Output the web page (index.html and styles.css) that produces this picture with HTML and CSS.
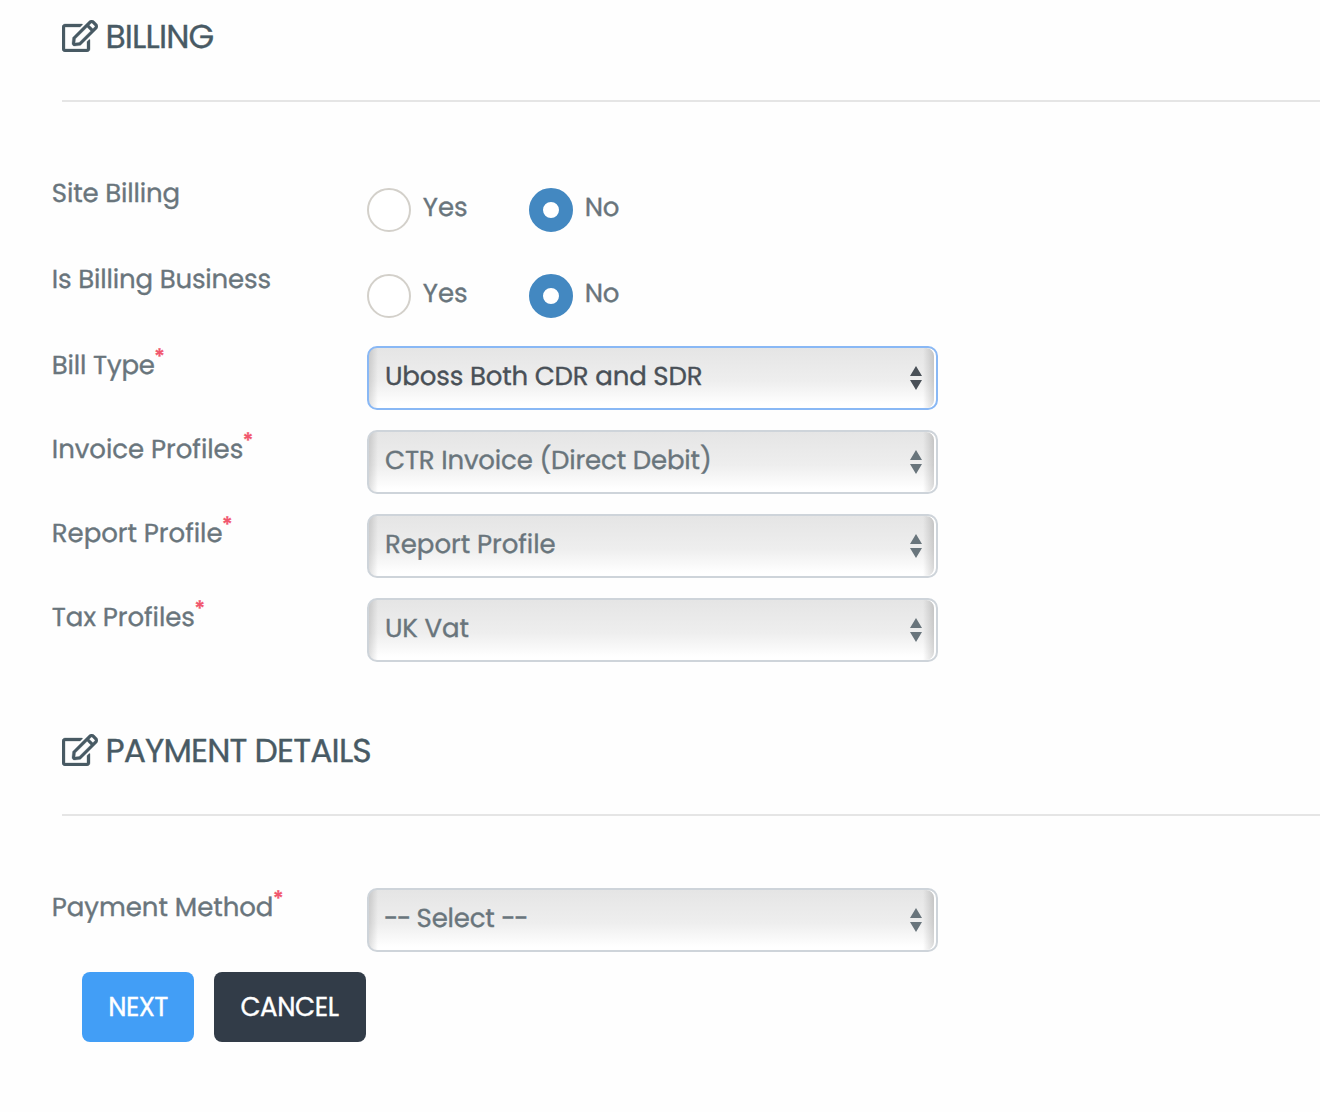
FILE: index.html
```html
<!DOCTYPE html>
<html lang="en">
<head>
<meta charset="utf-8">
<title>Billing</title>
<link rel="stylesheet" href="styles.css">
</head>
<body>
<svg class="sprite" aria-hidden="true">
  <symbol id="edit" viewBox="0 0 576 512"><path d="M402.3 344.9l32-32c5-5 13.7-1.5 13.7 5.7V464c0 26.5-21.5 48-48 48H48c-26.5 0-48-21.5-48-48V112c0-26.5 21.5-48 48-48h273.5c7.1 0 10.7 8.6 5.7 13.7l-32 32c-1.5 1.5-3.5 2.3-5.7 2.3H48v352h352V350.5c0-2.1.8-4.1 2.3-5.6zm156.6-201.8L296.3 405.7l-90.4 10c-26.2 2.9-48.5-19.2-45.6-45.6l10-90.4L432.9 17.1c22.9-22.9 59.9-22.9 82.7 0l43.2 43.2c22.9 22.9 22.9 60 .1 82.8zM460.1 174L402 115.9 216.2 301.8l-7.3 65.3 65.3-7.3L460.1 174zm64.8-79.7l-43.2-43.2c-4.1-4.1-10.8-4.1-14.8 0L436 82l58.1 58.1 30.9-30.9c4-4.2 4-10.8-.1-14.9z"/></symbol>
  <symbol id="sort" viewBox="0 0 12 24"><path d="M6 0l6 10H0zM6 24l6-10H0z"/></symbol>
</svg>
<form class="form">
  <h2 class="heading"><svg class="heading-icon"><use href="#edit"/></svg><span class="heading-text">BILLING</span></h2>
  <div class="row row-radio">
    <span class="label">Site Billing</span>
    <span class="option"><i class="radio"></i><span class="yes">Yes</span></span>
    <span class="option"><i class="radio checked"></i><span class="no">No</span></span>
  </div>
  <div class="row row-radio">
    <span class="label">Is Billing Business</span>
    <span class="option"><i class="radio"></i><span class="yes">Yes</span></span>
    <span class="option"><i class="radio checked"></i><span class="no">No</span></span>
  </div>
  <div class="row">
    <span class="label">Bill Type<b class="req">*</b></span>
    <div class="select focused"><span>Uboss Both CDR and SDR</span><svg class="sort"><use href="#sort"/></svg></div>
  </div>
  <div class="row">
    <span class="label tight">Invoice Profiles<b class="req">*</b></span>
    <div class="select"><span>CTR Invoice (Direct Debit)</span><svg class="sort"><use href="#sort"/></svg></div>
  </div>
  <div class="row">
    <span class="label tight">Report Profile<b class="req">*</b></span>
    <div class="select"><span class="tight">Report Profile</span><svg class="sort"><use href="#sort"/></svg></div>
  </div>
  <div class="row">
    <span class="label tight">Tax Profiles<b class="req">*</b></span>
    <div class="select"><span>UK Vat</span><svg class="sort"><use href="#sort"/></svg></div>
  </div>
  <h2 class="heading heading-second"><svg class="heading-icon"><use href="#edit"/></svg><span class="heading-text">PAYMENT DETAILS</span></h2>
  <div class="row">
    <span class="label tight">Payment Method<b class="req">*</b></span>
    <div class="select"><span class="placeholder"><span class="dashes">--</span> Select <span class="dashes">--</span></span><svg class="sort"><use href="#sort"/></svg></div>
  </div>
  <div class="actions">
    <button type="button" class="btn next">NEXT</button>
    <button type="button" class="btn cancel">CANCEL</button>
  </div>
</form>
</body>
</html>
```
FILE: styles.css
```css
* { box-sizing: border-box; }
body {
  margin: 0;
  background: #fefefe;
  color: #69757c;
  font: 400 26px/40px Poppins, Inter, sans-serif;
  letter-spacing: -.16px;
  text-rendering: geometricPrecision;
  -webkit-text-stroke: .35px currentColor;
}
.sprite { display: none; }
.form { padding-left: 51.8px; }
.heading {
  display: flex;
  align-items: center;
  gap: 7.4px;
  height: 102px;
  margin: 0 0 72px 10.2px;
  padding-bottom: 28px;
  border-bottom: 2px solid #e5e5e5;
  color: #485a64;
  font-size: 33px;
  font-weight: 400;
  letter-spacing: -.83px;
}
.heading-text { padding-top: 2px; }
.heading-second { height: 104px; margin-top: 50px; padding-bottom: 26px; }
.heading-icon {
  width: 36px;
  height: 32px;
  fill: currentColor;
  stroke: currentColor;
  stroke-width: 5;
  overflow: visible;
}
.row { display: flex; height: 64px; margin-bottom: 20px; }
.row-radio { height: 58px; margin-bottom: 28px; }
.label { width: 315.2px; white-space: nowrap; }
.tight { letter-spacing: -.03px; }
.req {
  color: #f1556c;
  font-size: 21px;
  font-weight: 500;
  line-height: 0;
  vertical-align: 10px;
  margin-left: -.5px;
}
.option { display: flex; gap: 11.8px; width: 162px; padding-top: 14px; }
.yes { letter-spacing: 0; }
.no { letter-spacing: -.4px; }
.radio {
  width: 44px;
  height: 44px;
  border: 2px solid #d3d0ca;
  border-radius: 50%;
  background: #fff;
}
.radio.checked { border: 14px solid #4388c1; }
.select {
  display: flex;
  justify-content: space-between;
  width: 571px;
  height: 64px;
  padding: 9px 14px 0 16px;
  border: 2px solid #ced4da;
  border-radius: 10px;
  background:
    linear-gradient(90deg, #00000020, #0000) 0 0 / 9px 100% no-repeat,
    linear-gradient(270deg, #00000026, #0000) calc(100% - 2px) 0 / 11px 100% no-repeat,
    linear-gradient(#e5e5e5, #eee 55%, #fff 95%);
  box-shadow: inset -2px 0 0 #fff;
}
.focused { border-color: #89b8f5; color: #495057; }
.placeholder { margin-left: -1px; letter-spacing: -.2px; }
.dashes { letter-spacing: -1.4px; }
.sort { width: 12px; height: 24px; margin-top: 9px; fill: currentColor; }
.actions { display: flex; gap: 20px; padding-left: 30.2px; }
.btn {
  height: 70px;
  padding: 0;
  border: 0;
  border-radius: 8px;
  color: #fff;
  font: inherit;
  letter-spacing: -.4px;
}
.next { width: 112px; background: #429ef6; letter-spacing: -.6px; }
.cancel { width: 152px; padding-right: 1px; background: #323c48; }
```
